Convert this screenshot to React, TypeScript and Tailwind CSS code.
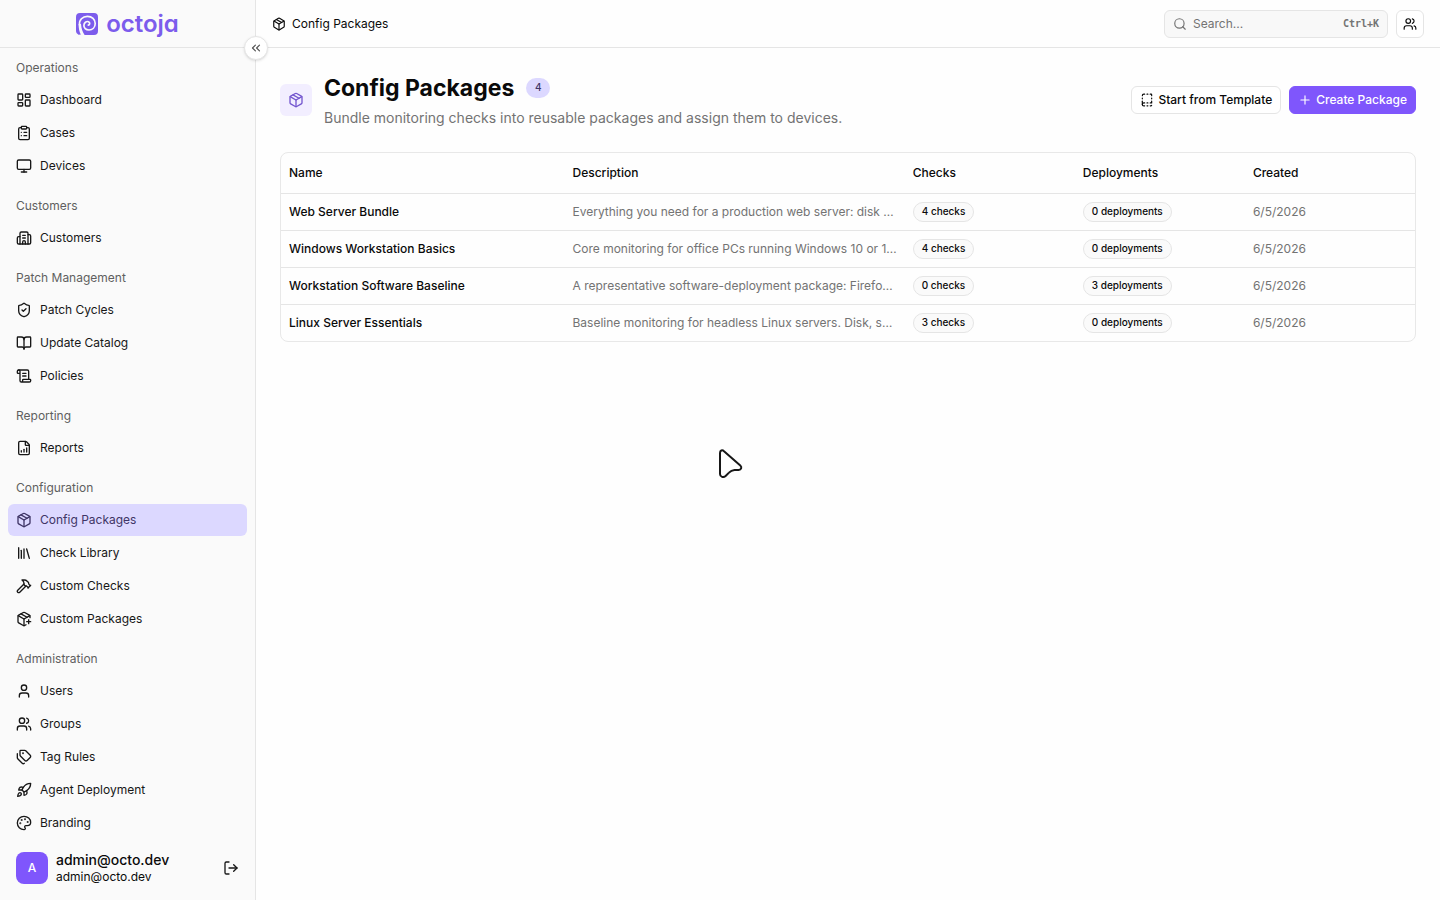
import React, { useState } from 'react';
import {
  LayoutDashboard, ClipboardList, Monitor, Building2, ShieldCheck, BookOpen, ScrollText, FileChartColumnIncreasing,
  Package, Library, Hammer, PackagePlus, User, Users, Tags, Rocket, Palette, LogOut, ChevronsLeft, Search, BookDashed, Plus,
} from 'lucide-react';

const navGroups = [
  {
    label: 'Operations',
    items: [
      { label: 'Dashboard', icon: LayoutDashboard },
      { label: 'Cases', icon: ClipboardList },
      { label: 'Devices', icon: Monitor },
    ],
  },
  { label: 'Customers', items: [{ label: 'Customers', icon: Building2 }] },
  {
    label: 'Patch Management',
    items: [
      { label: 'Patch Cycles', icon: ShieldCheck },
      { label: 'Update Catalog', icon: BookOpen },
      { label: 'Policies', icon: ScrollText },
    ],
  },
  { label: 'Reporting', items: [{ label: 'Reports', icon: FileChartColumnIncreasing }] },
  {
    label: 'Configuration',
    items: [
      { label: 'Config Packages', icon: Package },
      { label: 'Check Library', icon: Library },
      { label: 'Custom Checks', icon: Hammer },
      { label: 'Custom Packages', icon: PackagePlus },
    ],
  },
  {
    label: 'Administration',
    items: [
      { label: 'Users', icon: User },
      { label: 'Groups', icon: Users },
      { label: 'Tag Rules', icon: Tags },
      { label: 'Agent Deployment', icon: Rocket },
      { label: 'Branding', icon: Palette },
    ],
  },
];

const packages = [
  { name: 'Web Server Bundle', description: 'Everything you need for a production web server: disk space', checks: 4, deployments: 0, created: '6/5/2026' },
  { name: 'Windows Workstation Basics', description: 'Core monitoring for office PCs running Windows 10 or 11. Disk', checks: 4, deployments: 0, created: '6/5/2026' },
  { name: 'Workstation Software Baseline', description: 'A representative software-deployment package: Firefox, Zip', checks: 0, deployments: 3, created: '6/5/2026' },
  { name: 'Linux Server Essentials', description: 'Baseline monitoring for headless Linux servers. Disk, swap', checks: 3, deployments: 0, created: '6/5/2026' },
];

const Logo = () => (
  <a href="#" className="flex items-center gap-2 text-[#7c5cec]">
    <svg viewBox="0 0 22 22" className="size-[22px]" fill="none" aria-hidden="true">
      <path d="M4 0H18A4 4 0 0 1 22 4V18A4 4 0 0 1 18 22H8L5 21.600L2.500 21.800A4 4 0 0 1 0 18V4A4 4 0 0 1 4 0Z" fill="currentColor" />
      <path d="M2.600 11C2.600 15 3.300 19 5 22H8.600C6.700 19 5.400 16 5 11Z" fill="#fafafa" />
      <path d="M3.600 12C2.800 7 6.600 3.300 11.500 3.300C16 3.300 19.200 6.500 19.200 10.500C19.200 14.500 16.400 17 13 17C9.800 17 7.700 14.900 7.900 12.200C8.100 9.600 10.400 8 12.400 8.700C14.300 9.500 14 12 12.300 12.200" stroke="#fafafa" strokeWidth="1.700" strokeLinecap="round" />
    </svg>
    <span className="text-2xl font-semibold leading-6 [font-feature-settings:'cv11']">octoja</span>
  </a>
);

const Sidebar = ({ active, setActive }: { active: string; setActive: (v: string) => void }) => (
  <aside className="relative flex w-64 shrink-0 flex-col border-r border-[#e5e5e5] bg-[#fafafa]">
    <div className="flex h-12 shrink-0 items-center justify-center border-b border-[#e5e5e5]">
      <Logo />
    </div>
    <button
      aria-label="Collapse sidebar"
      className="absolute top-9 -right-[13px] z-10 flex size-6 items-center justify-center rounded-full border border-[#e5e5e5] bg-white text-neutral-600 shadow-sm"
    >
      <ChevronsLeft size={14} />
    </button>

    <nav className="flex min-h-0 flex-1 flex-col gap-2 overflow-hidden px-2 pt-1">
      {navGroups.map((group) => (
        <div key={group.label}>
          <div className="flex h-8 items-center px-2 text-[#5f5f5f]">{group.label}</div>
          <ul className="flex flex-col gap-px">
            {group.items.map(({ label, icon: Icon }) => (
              <li key={label}>
                <a
                  href="#"
                  onClick={() => setActive(label)}
                  className={`flex h-8 items-center gap-2 rounded-md px-2 ${
                    active === label ? 'bg-[#dcd8ff] text-[#3f3566]' : 'text-[#171717]'
                  }`}
                >
                  <Icon size={16} />
                  <span>{label}</span>
                </a>
              </li>
            ))}
          </ul>
        </div>
      ))}
    </nav>

    {/* Signed-in user */}
    <div className="flex h-16 shrink-0 items-center gap-2 px-4">
      <div className="flex size-8 items-center justify-center rounded-lg bg-[#7f56fc] font-medium text-white">A</div>
      <div className="flex flex-1 flex-col text-[#0a0a0a]">
        <span className="text-sm leading-[18px] font-medium">admin@octo.dev</span>
        <span className="leading-4">admin@octo.dev</span>
      </div>
      <button aria-label="Log out" className="text-[#171717]">
        <LogOut size={16} />
      </button>
    </div>
  </aside>
);

const CountBadge = ({ children }: { children: React.ReactNode }) => (
  <span className="flex h-5 w-fit items-center rounded-full border border-[#e5e5e5] bg-[#fafafa] px-2 text-[10px] font-medium text-[#0a0a0a]">
    {children}
  </span>
);

export default function App() {
  const [active, setActive] = useState('Config Packages');

  return (
    <div className="flex h-screen bg-[#fefefe] font-[Inter,sans-serif] text-xs text-[#0a0a0a]">
      <Sidebar active={active} setActive={setActive} />

      <div className="flex min-w-0 flex-1 flex-col">
        <header className="flex h-12 shrink-0 items-center justify-between border-b border-[#e5e5e5] px-4">
          <div className="flex items-center gap-1.5">
            <Package size={14} />
            <span>Config Packages</span>
          </div>
          <div className="flex items-center gap-2">
            <label className="flex h-7 w-56 items-center gap-1.5 rounded-md border border-[#e5e5e5] bg-[#f8f8f8] px-2 text-[#737373]">
              <Search size={14} />
              <input
                type="text"
                aria-label="Search"
                placeholder="Search..."
                className="min-w-0 flex-1 bg-transparent outline-none placeholder:text-[#737373]"
              />
              <kbd className="font-['DejaVu_Sans_Mono',monospace] text-[10px] font-bold">Ctrl+K</kbd>
            </label>
            <button aria-label="Accounts" className="flex size-7 items-center justify-center rounded-md border border-[#e5e5e5] bg-white">
              <Users size={14} />
            </button>
          </div>
        </header>

        <main className="flex flex-1 flex-col gap-6 p-6">
          <div className="flex items-center justify-between">
            <div className="flex items-center gap-3">
              <div className="flex size-8 items-center justify-center rounded-md bg-[#f2eeff] text-[#7457cf]">
                <Package size={16} />
              </div>
              <div>
                <div className="flex items-center gap-3">
                  <h1 className="text-[23px] leading-8 font-bold">Config Packages</h1>
                  <span className="flex h-5 w-6 items-center justify-center rounded-full bg-[#dcd8ff] text-[10px] font-medium text-[#3f3566]">4</span>
                </div>
                <p className="mt-1 text-sm text-[#737373]">Bundle monitoring checks into reusable packages and assign them to devices.</p>
              </div>
            </div>
            <div className="flex items-center gap-2">
              <button className="flex h-7 items-center gap-1 rounded-md border border-[#e5e5e5] bg-white px-2 font-medium">
                <BookDashed size={14} />
                Start from Template
              </button>
              <button className="flex h-7 items-center gap-1 rounded-md border border-[#7f56fc] bg-[#7f56fc] px-2 font-medium text-white">
                <Plus size={14} />
                Create Package
              </button>
            </div>
          </div>

          <div className="overflow-hidden rounded-lg border border-[#e8e8e8]">
            <table className="w-full table-fixed text-left">
              <thead>
                <tr className="h-10 border-b border-[#e5e5e5]">
                  <th className="w-[25%] px-2 font-medium">Name</th>
                  <th className="w-[30%] px-2 font-medium">Description</th>
                  <th className="w-[15%] px-2 font-medium">Checks</th>
                  <th className="w-[15%] px-2 font-medium">Deployments</th>
                  <th className="w-[15%] px-2 font-medium">Created</th>
                </tr>
              </thead>
              <tbody>
                {packages.map((p) => (
                  <tr key={p.name} className="h-[37px] border-b border-[#e5e5e5] last:border-b-0">
                    <td className="px-2 font-medium">{p.name}</td>
                    <td className="truncate pr-[7px] pl-2 text-[#737373]">{p.description}</td>
                    <td className="px-2"><CountBadge>{p.checks} checks</CountBadge></td>
                    <td className="px-2"><CountBadge>{p.deployments} deployments</CountBadge></td>
                    <td className="px-2 text-[#737373]">{p.created}</td>
                  </tr>
                ))}
              </tbody>
            </table>
          </div>
        </main>
      </div>

      {/* Pointer */}
      <svg className="pointer-events-none absolute top-[448px] left-[717px] w-[26px]" viewBox="0 0 26 32" fill="none" aria-hidden="true">
        <path
          d="M3 5C3 2.500 5.200 1.500 7 3.200L23.300 17.600C25.200 19.400 24.200 21.800 21.600 22H17.500C15 22.200 13.500 23 12 24.600L8.600 28C6.500 30 3 29 3 26Z"
          fill="#fff" stroke="#171717" strokeWidth="2" strokeLinejoin="round"
        />
      </svg>
    </div>
  );
}
